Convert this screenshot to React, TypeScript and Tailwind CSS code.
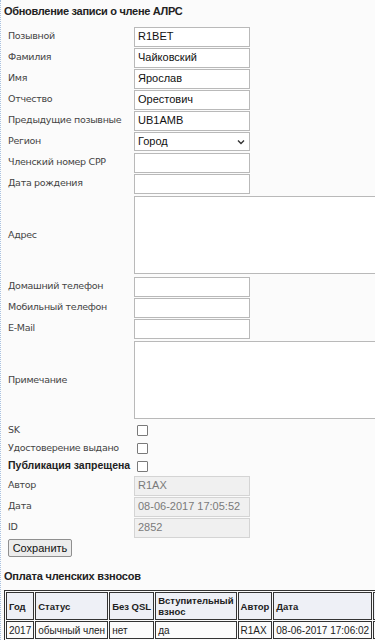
import React from 'react';

const labelFont = { fontFamily: 'Verdana, "DejaVu Sans", sans-serif' };
const narrowFont = { fontFamily: 'Tahoma, "Liberation Sans", Arial, sans-serif' };

const textRows = [
  { label: 'Позывной', value: 'R1BET' },
  { label: 'Фамилия', value: 'Чайковский' },
  { label: 'Имя', value: 'Ярослав' },
  { label: 'Отчество', value: 'Орестович' },
  { label: 'Предыдущие позывные', value: 'UB1AMB' },
];

const Label = ({ children, bold }: { children: React.ReactNode; bold?: boolean }) =>
  bold ? (
    <div
      className="w-[126px] shrink-0 whitespace-nowrap text-[10.5px] font-bold text-[#222]"
      style={narrowFont}
    >
      {children}
    </div>
  ) : (
    <div
      className="w-[126px] shrink-0 whitespace-nowrap text-[9.5px] text-[#444] tracking-[-0.3px]"
      style={labelFont}
    >
      {children}
    </div>
  );

const TextInput = ({ value = '', disabled }: { value?: string; disabled?: boolean }) => (
  <div
    className={
      disabled
        ? 'w-[116px] h-[20px] border border-[#d4d4d4] bg-[#f0f0f0] px-[3px] flex items-center text-[11px] text-[#7a7a7a]'
        : 'w-[116px] h-[20px] border border-[#b9b9b9] bg-white px-[3px] flex items-center text-[11px] text-[#111]'
    }
    style={narrowFont}
  >
    {value}
  </div>
);

const Row = ({ children, h = 'h-[21px]' }: { children: React.ReactNode; h?: string }) => (
  <div className={`flex items-center ${h}`}>{children}</div>
);

const Checkbox = () => (
  <div className="ml-[3px] w-[11px] h-[11px] border border-[#7a7a7a] bg-white rounded-[1px]" />
);

const headers = ['Год', 'Статус', 'Без QSL', 'Вступительный взнос', 'Автор', 'Дата', ''];
const widths = ['w-[28px]', 'w-[71px]', 'w-[50px]', 'w-[80px]', 'w-[35px]', 'w-[100px]', 'w-[30px]'];
const cells = ['2017', 'обычный член', 'нет', 'да', 'R1AX', '08-06-2017 17:06:02', ''];

export default function App() {
  return (
    <div className="w-[375px] h-[640px] overflow-hidden bg-[#fbfbfb] relative">
      <div className="absolute left-0 top-0 bottom-0 w-[1px] border-l border-dotted border-[#a9c2e0]" />
      <div className="pl-[4px] pt-[4px]">
        <div
          className="text-[11px] font-bold text-[#222] h-[18px] leading-[14px] tracking-[-0.3px]"
          style={narrowFont}
        >
          Обновление записи о члене АЛРС
        </div>
        <div className="pl-[4px] pt-[4px] flex flex-col">
          {textRows.map((r) => (
            <Row key={r.label}>
              <Label>{r.label}</Label>
              <TextInput value={r.value} />
            </Row>
          ))}
          <Row>
            <Label>Регион</Label>
            <div
              className="w-[116px] h-[19px] border border-[#b9b9b9] bg-white pl-[3px] pr-[4px] flex items-center justify-between text-[11px] text-[#111]"
              style={narrowFont}
            >
              <span>Город</span>
              <svg width="8" height="6" viewBox="0 0 8 6">
                <path d="M1 1.5 L4 4.5 L7 1.5" fill="none" stroke="#333" strokeWidth="1.4" />
              </svg>
            </div>
          </Row>
          <Row>
            <Label>Членский номер СРР</Label>
            <TextInput />
          </Row>
          <Row>
            <Label>Дата рождения</Label>
            <TextInput />
          </Row>
          <Row h="h-[82px]">
            <Label>Адрес</Label>
            <div className="w-[250px] h-[78px] border border-[#b9b9b9] bg-white shrink-0" />
          </Row>
          <Row>
            <Label>Домашний телефон</Label>
            <TextInput />
          </Row>
          <Row>
            <Label>Мобильный телефон</Label>
            <TextInput />
          </Row>
          <Row>
            <Label>E-Mail</Label>
            <TextInput />
          </Row>
          <Row h="h-[82px]">
            <Label>Примечание</Label>
            <div className="w-[250px] h-[78px] border border-[#b9b9b9] bg-white shrink-0" />
          </Row>
          <Row h="h-[18px]">
            <Label>SK</Label>
            <Checkbox />
          </Row>
          <Row h="h-[18px]">
            <Label>Удостоверение выдано</Label>
            <Checkbox />
          </Row>
          <Row h="h-[18px]">
            <Label bold>Публикация запрещена</Label>
            <Checkbox />
          </Row>
          <Row>
            <Label>Автор</Label>
            <TextInput value="R1AX" disabled />
          </Row>
          <Row>
            <Label>Дата</Label>
            <TextInput value="08-06-2017 17:05:52" disabled />
          </Row>
          <Row>
            <Label>ID</Label>
            <TextInput value="2852" disabled />
          </Row>
          <div className="pt-[1px]">
            <button
              className="h-[18px] w-[64px] border border-[#8f8f8f] bg-[#ececec] text-[11px] text-[#111] rounded-[2px] flex items-center justify-center"
              style={narrowFont}
            >
              Сохранить
            </button>
          </div>
        </div>
        <div
          className="text-[11px] font-bold text-[#222] mt-[12px] h-[16px] leading-[14px] tracking-[-0.2px]"
          style={narrowFont}
        >
          Оплата членских взносов
        </div>
        <table
          className="mt-[5px] border border-[#333] border-separate border-spacing-[1px] table-fixed text-[10px] text-[#222] whitespace-nowrap"
          style={narrowFont}
        >
          <thead>
            <tr className="bg-[#eef0f6]">
              {headers.map((h, i) => (
                <th
                  key={i}
                  className={`${widths[i]} border border-[#333] px-[2px] h-[28px] text-left font-bold text-[9.5px] leading-[11px] align-middle overflow-hidden`}
                >
                  {h === 'Вступительный взнос' ? (
                    <>
                      Вступительный
                      <br />
                      взнос
                    </>
                  ) : (
                    h
                  )}
                </th>
              ))}
            </tr>
          </thead>
          <tbody>
            <tr>
              {cells.map((c, i) => (
                <td key={i} className="border border-[#333] px-[2px] h-[18px] text-left overflow-hidden">
                  {i === 6 ? <span className="inline-block w-[3px] h-[3px] bg-[#e8a040] -ml-[1px]" /> : c}
                </td>
              ))}
            </tr>
          </tbody>
        </table>
      </div>
    </div>
  );
}
